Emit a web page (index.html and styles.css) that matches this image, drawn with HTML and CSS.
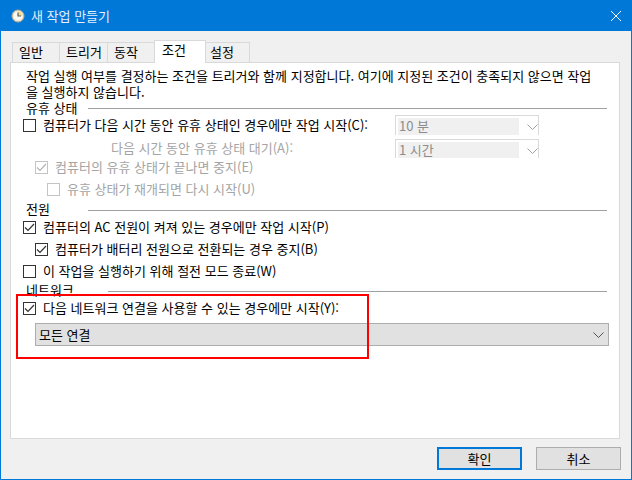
FILE: index.html
```html
<!DOCTYPE html>
<html lang="ko">
<head>
<meta charset="utf-8">
<title>새 작업 만들기</title>
<link rel="stylesheet" href="styles.css">
</head>
<body>
<div class="window">
  <header class="titlebar">
    <svg class="clock" width="14" height="14" viewBox="0 0 14 14">
      <circle cx="7" cy="7" r="6" fill="#e9e3d2" stroke="#b9ad90"/>
      <circle cx="7" cy="7" r="4.4" fill="#fbfaf4"/>
      <path d="M7 7V2.6A4.4 4.4 0 0 1 11.4 7Z" fill="#f6d98a"/>
      <path d="M7 3.6V7H10" fill="none" stroke="#5a5a5a" stroke-width="1.2"/>
    </svg>
    <span class="title">새 작업 만들기</span>
    <svg class="close" width="10" height="10" viewBox="0 0 10 10"><path d="M0 0L10 10M10 0L0 10" stroke="#fff" stroke-width="1"/></svg>
  </header>
  <main class="body">
    <nav class="tabs">
      <div class="tab t1">일반</div>
      <div class="tab t2">트리거</div>
      <div class="tab t3">동작</div>
      <div class="tab t4 active">조건</div>
      <div class="tab t5">설정</div>
    </nav>
    <section class="panel">
      <p class="intro">작업 실행 여부를 결정하는 조건을 트리거와 함께 지정합니다. 여기에 지정된 조건이 충족되지 않으면 작업<br>을 실행하지 않습니다.</p>

      <div class="group g-idle"><span>유휴 상태</span><i></i></div>
      <div class="row r-idle">
        <label class="check"><b class="box"></b>컴퓨터가 다음 시간 동안 유휴 상태인 경우에만 작업 시작(C):</label>
        <div class="combo"><span>10 분</span><svg width="11" height="6" viewBox="0 0 11 6"><path d="M.5.5L5.5 5.5L10.5.5" fill="none" stroke="#a0a0a0"/></svg></div>
      </div>
      <div class="row r-wait">
        <span class="wait dim">다음 시간 동안 유휴 상태 대기(A):</span>
        <div class="combo"><span>1 시간</span><svg width="11" height="6" viewBox="0 0 11 6"><path d="M.5.5L5.5 5.5L10.5.5" fill="none" stroke="#a0a0a0"/></svg></div>
      </div>
      <div class="row r-stop ind1">
        <label class="check dim"><b class="box off"><svg width="11" height="11" viewBox="0 0 11 11"><path d="M1 5.5L4 8.5L10 2" fill="none" stroke="#b4b4b4" stroke-width="1.2"/></svg></b>컴퓨터의 유휴 상태가 끝나면 중지(E)</label>
      </div>
      <div class="row r-resume ind2">
        <label class="check dim"><b class="box off"></b>유휴 상태가 재개되면 다시 시작(U)</label>
      </div>

      <div class="group g-power"><span>전원</span><i></i></div>
      <div class="row r-ac">
        <label class="check"><b class="box"><svg width="11" height="11" viewBox="0 0 11 11"><path d="M1 5.5L4 8.5L10 2" fill="none" stroke="#333" stroke-width="1.2"/></svg></b>컴퓨터의 AC 전원이 켜져 있는 경우에만 작업 시작(P)</label>
      </div>
      <div class="row r-batt ind1">
        <label class="check"><b class="box"><svg width="11" height="11" viewBox="0 0 11 11"><path d="M1 5.5L4 8.5L10 2" fill="none" stroke="#333" stroke-width="1.2"/></svg></b>컴퓨터가 배터리 전원으로 전환되는 경우 중지(B)</label>
      </div>
      <div class="row r-wake">
        <label class="check"><b class="box"></b>이 작업을 실행하기 위해 절전 모드 종료(W)</label>
      </div>

      <div class="group g-net"><span>네트워크</span><i></i></div>
      <div class="row r-net">
        <label class="check"><b class="box"><svg width="11" height="11" viewBox="0 0 11 11"><path d="M1 5.5L4 8.5L10 2" fill="none" stroke="#333" stroke-width="1.2"/></svg></b>다음 네트워크 연결을 사용할 수 있는 경우에만 시작(Y):</label>
      </div>
      <div class="netselect"><span>모든 연결</span><svg width="11" height="6" viewBox="0 0 11 6"><path d="M.5.5L5.5 5.5L10.5.5" fill="none" stroke="#555"/></svg></div>
      <div class="highlight"></div>
    </section>
    <footer class="actions">
      <button class="btn primary">확인</button>
      <button class="btn">취소</button>
    </footer>
  </main>
</div>
</body>
</html>
```
FILE: styles.css
```css
* { box-sizing: border-box; }
html, body { margin: 0; padding: 0; }
body {
  width: 632px; height: 480px; overflow: hidden;
  font: 13px/16px "Noto Sans CJK KR", "Liberation Sans", sans-serif;
  color: #000;
}
.window {
  width: 632px; height: 480px;
  display: flex; flex-direction: column;
  border: 1px solid #0078d7;
  border-top: 0;
  background: #f0f0f0;
}
.titlebar {
  height: 31px; flex: none;
  background: #0078d7; color: #fff;
  display: flex; align-items: center;
  padding: 1px 10px 0 10px;
}
.clock { flex: none; }
.title { margin-left: 6px; color: #e4f0fb; flex: 1; margin-top: -1px; }
.close { flex: none; margin-top: -1px; }
.body { flex: 1; padding: 9px 11px 0 9px; position: relative; display: flex; flex-direction: column; }
.tabs { display: flex; height: 22px; padding-left: 2px; align-items: flex-end; position: relative; z-index: 1; }
.tab {
  height: 20px; text-align: left; line-height: 18px; padding-left: 6px;
  background: #f0f0f0;
  border: 1px solid #d9d9d9; border-bottom: 0; margin-left: -1px;
}
.t1 { width: 48px; margin-left: 0; }
.t2 { width: 49px; }
.t3 { width: 48px; }
.t4 { width: 52px; padding-left: 7px; }
.t5 { width: 45px; padding-left: 4px; }
.tab.active { height: 23px; margin-bottom: -1px; background: #fff; position: relative; z-index: 2; }
.panel {
  position: relative;
  height: 377px; background: #fff;
  border: 1px solid #d9d9d9;
  padding: 5px 0 0 12px;
}
.intro { margin: 0 0 0 3px; line-height: 16px; }
.group { display: flex; align-items: center; height: 16px; margin-left: 3px; margin-right: 12px; }
.group span { flex: none; width: 62px; }
.group i { flex: 1; height: 1px; background: #a0a0a0; margin-top: 1px; }
.g-power { margin-top: 1px; height: 15px; }
.g-power i, .g-net i { margin-top: 4px; }
.g-net { height: 15px; }
.g-net span { width: 82px; }
.row { display: flex; align-items: center; height: 22px; }
.check { display: flex; align-items: center; }
.box {
  flex: none; width: 13px; height: 13px; border: 1px solid #333; margin-right: 7px; background: #fff;
  display: flex; align-items: center; justify-content: center;
}
.box.off { border-color: #c4c4c4; }
.dim { color: #a4a4a4; }
.r-idle { position: relative; height: 18px; }
.combo {
  position: absolute; left: 372px; top: -1px; width: 144px; height: 20px;
  border: 1px solid #d9d9d9; border-bottom: 0;
  display: flex; align-items: flex-start; color: #8c8c8c;
  padding: 2px 0 0 2px; background: #fff;
}
.combo span { flex: none; width: 121px; height: 17px; line-height: 15px; background: #f0f0f0; padding-left: 1px; }
.combo svg { margin: 6px 0 0 8px; flex: none; }
.r-wait { position: relative; }
.r-wait .combo { top: 5px; height: 19px; }
.r-wait .combo span { height: 16px; }
.wait { margin: 6px 0 0 88px; }
.ind1 { margin-left: 12px; }
.ind2 { margin-left: 24px; }
.netselect {
  margin: 4px 0 0 12px; width: 574px; height: 23px;
  background: #e1e1e1; border: 1px solid #adadad;
  display: flex; align-items: center; justify-content: space-between;
  padding: 0 4px 0 3px;
}
.highlight {
  position: absolute; left: 5px; top: 231px; width: 353px; height: 65px;
  border: 2px solid #f00; pointer-events: none;
}
.actions { display: flex; justify-content: flex-end; gap: 14px; padding-top: 8px; margin-right: -1px; }
.btn {
  width: 85px; height: 23px; padding: 0;
  font: 13px/16px "Noto Sans CJK KR", "Liberation Sans", sans-serif;
  background: #e1e1e1; border: 1px solid #adadad; color: #000;
}
.btn.primary { border: 2px solid #0078d7; }
```
